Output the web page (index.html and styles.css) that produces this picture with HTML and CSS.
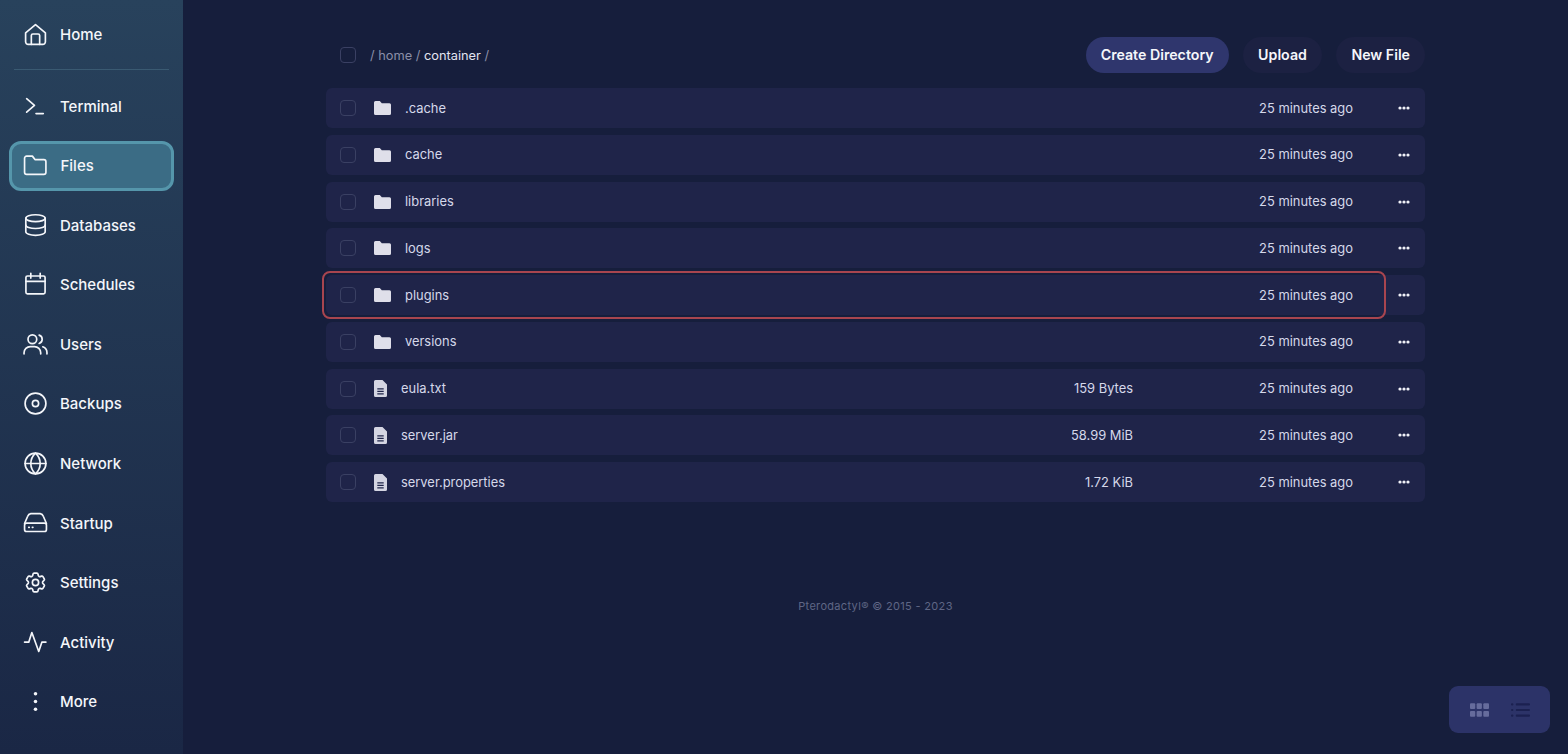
FILE: index.html
```html
<!DOCTYPE html>
<html lang="en">
<head>
    <meta charset="UTF-8">
    <title>Files</title>
    <meta name="viewport" content="width=device-width, initial-scale=1">
    <link rel="stylesheet" href="styles.css">
</head>
<body>
    <nav class="sidebar">
        <a class="nav-item nav-home">
            <svg class="nav-icon" viewBox="0 0 24 24"><path d="M2.500 10.500 12 2.500l9.500 8V19a2.500 2.500 0 0 1-2.500 2.500H5A2.500 2.500 0 0 1 2.500 19z"/><path d="M8 21.500V13a1.500 1.500 0 0 1 1.500-1.500h5A1.500 1.500 0 0 1 16 13v8.500"/></svg>
            <span>Home</span>
        </a>
        <div class="nav-divider"></div>
        <a class="nav-item">
            <svg class="nav-icon" viewBox="0 0 24 24"><path d="m3.500 4.500 7.500 6.500-7.500 6.500"/><path d="M12.500 18.800h7"/></svg>
            <span>Terminal</span>
        </a>
        <a class="nav-item is-active">
            <svg class="nav-icon" viewBox="0 0 24 24"><path d="M1.500 5a2 2 0 0 1 2-2h5.500l2.500 3.300H20a2 2 0 0 1 2 2V18.500a2 2 0 0 1-2 2H3.500a2 2 0 0 1-2-2z"/></svg>
            <span>Files</span>
        </a>
        <a class="nav-item">
            <svg class="nav-icon" viewBox="0 0 24 24"><ellipse cx="12" cy="5" rx="9.300" ry="3.300"/><path d="M2.700 5v13c0 1.900 4.200 3.400 9.300 3.400s9.300-1.500 9.300-3.400V5"/><path d="M2.700 11.500c0 1.900 4.200 3.400 9.300 3.400s9.300-1.500 9.300-3.400"/></svg>
            <span>Databases</span>
        </a>
        <a class="nav-item">
            <svg class="nav-icon" viewBox="0 0 24 24"><rect x="2.800" y="3.800" width="18.400" height="17.200" rx="1.500"/><path d="M7.500 1.200v4.600M16.500 1.200v4.600M2.800 9h18.400"/></svg>
            <span>Schedules</span>
        </a>
        <a class="nav-item">
            <svg class="nav-icon" viewBox="0 0 24 24"><circle cx="9" cy="7" r="4.200"/><path d="M1 21v-1a6 6 0 0 1 6-6h4a6 6 0 0 1 6 6v1"/><path d="M15.500 3a4.200 4.200 0 0 1 0 8"/><path d="M19 14.200a6 6 0 0 1 4 5.600V21"/></svg>
            <span>Users</span>
        </a>
        <a class="nav-item">
            <svg class="nav-icon" viewBox="0 0 24 24"><circle cx="12" cy="12" r="10"/><circle cx="12" cy="12" r="3"/></svg>
            <span>Backups</span>
        </a>
        <a class="nav-item">
            <svg class="nav-icon" viewBox="0 0 24 24"><circle cx="12" cy="12" r="10"/><path d="M2 12h20"/><path d="M12 2c3 2.800 4.500 6.200 4.500 10s-1.500 7.200-4.500 10c-3-2.800-4.500-6.200-4.500-10S9 4.800 12 2z"/></svg>
            <span>Network</span>
        </a>
        <a class="nav-item">
            <svg class="nav-icon" viewBox="0 0 24 24"><path d="M1.500 12 4.500 5a4 4 0 0 1 3-2.500h9a4 4 0 0 1 3 2.500l3 7"/><rect x="1.500" y="11.700" width="21" height="8" rx="2"/><path d="M5.500 15.700h.5M9 15.700h.5"/></svg>
            <span>Startup</span>
        </a>
        <a class="nav-item">
            <svg class="nav-icon" viewBox="0 0 24 24"><path d="M9.594 3.940c.09-.542.56-.94 1.110-.94h2.593c.55 0 1.020.398 1.110.94l.213 1.281c.063.374.313.686.645.870.074.040.147.083.22.127.325.196.72.257 1.075.124l1.217-.456a1.125 1.125 0 0 1 1.370.49l1.296 2.247a1.125 1.125 0 0 1-.26 1.431l-1.003.827c-.293.241-.438.613-.43.992a7.723 7.723 0 0 1 0 .255c-.008.378.137.75.43.991l1.004.827c.424.35.534.955.26 1.430l-1.298 2.247a1.125 1.125 0 0 1-1.369.491l-1.217-.456c-.355-.133-.75-.072-1.076.124a6.470 6.470 0 0 1-.22.128c-.331.183-.581.495-.644.869l-.213 1.281c-.09.543-.56.94-1.110.94h-2.594c-.55 0-1.019-.398-1.110-.94l-.213-1.281c-.062-.374-.312-.686-.644-.870a6.520 6.520 0 0 1-.22-.127c-.325-.196-.72-.257-1.076-.124l-1.217.456a1.125 1.125 0 0 1-1.369-.49l-1.297-2.247a1.125 1.125 0 0 1 .26-1.431l1.004-.827c.292-.24.437-.613.43-.991a6.932 6.932 0 0 1 0-.255c.007-.38-.138-.751-.43-.992l-1.004-.827a1.125 1.125 0 0 1-.26-1.430l1.297-2.247a1.125 1.125 0 0 1 1.370-.491l1.216.456c.356.133.751.072 1.076-.124.072-.044.146-.086.22-.128.332-.183.582-.495.644-.869l.214-1.280z"/><circle cx="12" cy="12" r="3"/></svg>
            <span>Settings</span>
        </a>
        <a class="nav-item">
            <svg class="nav-icon" viewBox="0 0 24 24"><path d="M1.500 11.700h4l3-9.300 6.600 18.200 3-8.900h3.900"/></svg>
            <span>Activity</span>
        </a>
        <a class="nav-item">
            <svg class="nav-icon" viewBox="0 0 24 24"><circle class="dot" cx="12" cy="4.500" r="1.700"/><circle class="dot" cx="12" cy="12" r="1.700"/><circle class="dot" cx="12" cy="19.500" r="1.700"/></svg>
            <span>More</span>
        </a>
    </nav>

    <main class="main">
        <div class="content">
            <div class="toolbar">
                <div class="crumbs">
                    <span class="check"></span>
                    <span class="crumb-path">/ home / <b>container</b> /</span>
                </div>
                <div class="actions">
                    <button class="btn btn-primary">Create Directory</button>
                    <button class="btn">Upload</button>
                    <button class="btn">New File</button>
                </div>
            </div>

            <div class="file-row">
                <span class="check"></span>
                <svg class="folder-icon" viewBox="0 0 17 14"><path d="M0 1.500A1.500 1.500 0 0 1 1.500 0h4.300l2 2.200h7.700A1.500 1.500 0 0 1 17 3.700v8.800a1.500 1.500 0 0 1-1.500 1.500h-14A1.500 1.500 0 0 1 0 12.500z"/></svg>
                <span class="file-name">.cache</span>
                <span class="file-size"></span>
                <span class="file-date">25 minutes ago</span>
                <svg class="more-icon" viewBox="0 0 12 4"><circle cx="2" cy="2" r="1.600"/><circle cx="6" cy="2" r="1.600"/><circle cx="10" cy="2" r="1.600"/></svg>
            </div>
            <div class="file-row">
                <span class="check"></span>
                <svg class="folder-icon" viewBox="0 0 17 14"><path d="M0 1.500A1.500 1.500 0 0 1 1.500 0h4.300l2 2.200h7.700A1.500 1.500 0 0 1 17 3.700v8.800a1.500 1.500 0 0 1-1.500 1.500h-14A1.500 1.500 0 0 1 0 12.500z"/></svg>
                <span class="file-name">cache</span>
                <span class="file-size"></span>
                <span class="file-date">25 minutes ago</span>
                <svg class="more-icon" viewBox="0 0 12 4"><circle cx="2" cy="2" r="1.600"/><circle cx="6" cy="2" r="1.600"/><circle cx="10" cy="2" r="1.600"/></svg>
            </div>
            <div class="file-row">
                <span class="check"></span>
                <svg class="folder-icon" viewBox="0 0 17 14"><path d="M0 1.500A1.500 1.500 0 0 1 1.500 0h4.300l2 2.200h7.700A1.500 1.500 0 0 1 17 3.700v8.800a1.500 1.500 0 0 1-1.500 1.500h-14A1.500 1.500 0 0 1 0 12.500z"/></svg>
                <span class="file-name">libraries</span>
                <span class="file-size"></span>
                <span class="file-date">25 minutes ago</span>
                <svg class="more-icon" viewBox="0 0 12 4"><circle cx="2" cy="2" r="1.600"/><circle cx="6" cy="2" r="1.600"/><circle cx="10" cy="2" r="1.600"/></svg>
            </div>
            <div class="file-row">
                <span class="check"></span>
                <svg class="folder-icon" viewBox="0 0 17 14"><path d="M0 1.500A1.500 1.500 0 0 1 1.500 0h4.300l2 2.200h7.700A1.500 1.500 0 0 1 17 3.700v8.800a1.500 1.500 0 0 1-1.500 1.500h-14A1.500 1.500 0 0 1 0 12.500z"/></svg>
                <span class="file-name">logs</span>
                <span class="file-size"></span>
                <span class="file-date">25 minutes ago</span>
                <svg class="more-icon" viewBox="0 0 12 4"><circle cx="2" cy="2" r="1.600"/><circle cx="6" cy="2" r="1.600"/><circle cx="10" cy="2" r="1.600"/></svg>
            </div>
            <div class="file-row has-marker">
                <span class="check"></span>
                <svg class="folder-icon" viewBox="0 0 17 14"><path d="M0 1.500A1.500 1.500 0 0 1 1.500 0h4.300l2 2.200h7.700A1.500 1.500 0 0 1 17 3.700v8.800a1.500 1.500 0 0 1-1.500 1.500h-14A1.500 1.500 0 0 1 0 12.500z"/></svg>
                <span class="file-name">plugins</span>
                <span class="file-size"></span>
                <span class="file-date">25 minutes ago</span>
                <svg class="more-icon" viewBox="0 0 12 4"><circle cx="2" cy="2" r="1.600"/><circle cx="6" cy="2" r="1.600"/><circle cx="10" cy="2" r="1.600"/></svg>
                <div class="row-marker"></div>
            </div>
            <div class="file-row">
                <span class="check"></span>
                <svg class="folder-icon" viewBox="0 0 17 14"><path d="M0 1.500A1.500 1.500 0 0 1 1.500 0h4.300l2 2.200h7.700A1.500 1.500 0 0 1 17 3.700v8.800a1.500 1.500 0 0 1-1.500 1.500h-14A1.500 1.500 0 0 1 0 12.500z"/></svg>
                <span class="file-name">versions</span>
                <span class="file-size"></span>
                <span class="file-date">25 minutes ago</span>
                <svg class="more-icon" viewBox="0 0 12 4"><circle cx="2" cy="2" r="1.600"/><circle cx="6" cy="2" r="1.600"/><circle cx="10" cy="2" r="1.600"/></svg>
            </div>
            <div class="file-row">
                <span class="check"></span>
                <svg class="doc-icon" viewBox="0 0 13 17"><path fill-rule="evenodd" d="M1.500 0H8.500L13 4.500v11a1.500 1.500 0 0 1-1.500 1.500h-10A1.500 1.500 0 0 1 0 15.500v-14A1.500 1.500 0 0 1 1.500 0zM3.300 8.200v1.300h6.400V8.200zm0 2.500V12h6.400v-1.300zm0 2.500v1.300h6.400v-1.300z"/></svg>
                <span class="file-name">eula.txt</span>
                <span class="file-size">159 Bytes</span>
                <span class="file-date">25 minutes ago</span>
                <svg class="more-icon" viewBox="0 0 12 4"><circle cx="2" cy="2" r="1.600"/><circle cx="6" cy="2" r="1.600"/><circle cx="10" cy="2" r="1.600"/></svg>
            </div>
            <div class="file-row">
                <span class="check"></span>
                <svg class="doc-icon" viewBox="0 0 13 17"><path fill-rule="evenodd" d="M1.500 0H8.500L13 4.500v11a1.500 1.500 0 0 1-1.500 1.500h-10A1.500 1.500 0 0 1 0 15.500v-14A1.500 1.500 0 0 1 1.500 0zM3.300 8.200v1.300h6.400V8.200zm0 2.500V12h6.400v-1.300zm0 2.500v1.300h6.400v-1.300z"/></svg>
                <span class="file-name">server.jar</span>
                <span class="file-size">58.99 MiB</span>
                <span class="file-date">25 minutes ago</span>
                <svg class="more-icon" viewBox="0 0 12 4"><circle cx="2" cy="2" r="1.600"/><circle cx="6" cy="2" r="1.600"/><circle cx="10" cy="2" r="1.600"/></svg>
            </div>
            <div class="file-row">
                <span class="check"></span>
                <svg class="doc-icon" viewBox="0 0 13 17"><path fill-rule="evenodd" d="M1.500 0H8.500L13 4.500v11a1.500 1.500 0 0 1-1.500 1.500h-10A1.500 1.500 0 0 1 0 15.500v-14A1.500 1.500 0 0 1 1.500 0zM3.300 8.200v1.300h6.400V8.200zm0 2.500V12h6.400v-1.300zm0 2.500v1.300h6.400v-1.300z"/></svg>
                <span class="file-name">server.properties</span>
                <span class="file-size">1.72 KiB</span>
                <span class="file-date">25 minutes ago</span>
                <svg class="more-icon" viewBox="0 0 12 4"><circle cx="2" cy="2" r="1.600"/><circle cx="6" cy="2" r="1.600"/><circle cx="10" cy="2" r="1.600"/></svg>
            </div>

            <footer class="footer">Pterodactyl&reg; &copy; 2015 - 2023</footer>
        </div>
    </main>

    <div class="view-toggle">
        <svg class="toggle-icon toggle-grid" viewBox="0 0 20 14"><rect x="0" y="0" width="5.500" height="6" rx="1"/><rect x="7" y="0" width="5.500" height="6" rx="1"/><rect x="14" y="0" width="6" height="6" rx="1"/><rect x="0" y="8" width="5.500" height="6" rx="1"/><rect x="7" y="8" width="5.500" height="6" rx="1"/><rect x="14" y="8" width="6" height="6" rx="1"/></svg>
        <svg class="toggle-icon toggle-list" viewBox="0 0 20 14"><rect x="0" y="0" width="2.500" height="2.200" rx="1"/><rect x="5" y="0" width="15" height="2.200" rx="1"/><rect x="0" y="5.900" width="2.500" height="2.200" rx="1"/><rect x="5" y="5.900" width="15" height="2.200" rx="1"/><rect x="0" y="11.800" width="2.500" height="2.200" rx="1"/><rect x="5" y="11.800" width="15" height="2.200" rx="1"/></svg>
    </div>
</body>
</html>
```

FILE: styles.css
```css
:root {
    --page-bg: #161e3c;
    --row-bg: #1f2449;
    --text-main: #d5d8ea;
}
* { box-sizing: border-box; }
html, body {
    height: 100%;
}
body {
    margin: 0;
    display: flex;
    background: var(--page-bg);
    color: var(--text-main);
    font-family: Inter, 'Noto Sans', sans-serif;
    overflow: hidden;
}

/* sidebar */
.sidebar {
    width: 183px;
    flex: none;
    height: 754px;
    padding: 5px 9px 0 10px;
    background: linear-gradient(180deg, #28425c 0%, #1a2745 100%);
    display: flex;
    flex-direction: column;
}
.nav-item {
    height: 48px;
    margin-bottom: 11.600px;
    padding-left: 10.500px;
    display: flex;
    align-items: center;
    gap: 12.500px;
    border: 2.500px solid transparent;
    border-radius: 12px;
    color: #f4f6fa;
    font-size: 15px;
    font-weight: 500;
}
.nav-home {
    margin: 5.500px 0 0;
}
.nav-divider {
    height: 1px;
    margin: 10.500px 5px 12px 4px;
    background: #3a5a72;
}
.is-active {
    height: 50px;
    margin: -1px 0 10.600px -1px;
    padding-left: 11px;
    background: #3b6c85;
    border: 3px solid #5596ab;
}
.nav-icon {
    width: 25px;
    height: 25px;
    flex: none;
    fill: none;
    stroke: #f4f6fa;
    stroke-width: 1.600;
    stroke-linecap: round;
    stroke-linejoin: round;
}
.nav-icon .dot {
    fill: #f4f6fa;
    stroke: none;
}

/* main */
.main {
    flex: 1;
    display: flex;
    justify-content: center;
}
.content {
    width: 1099px;
    padding-top: 37px;
}
.toolbar {
    height: 36px;
    margin-bottom: 15px;
    display: flex;
    align-items: center;
    justify-content: space-between;
}
.crumbs {
    display: flex;
    align-items: center;
    padding-left: 14px;
}
.crumb-path {
    margin-left: 14px;
    font-size: 12.800px;
    color: #8b8fa8;
}
.crumb-path b {
    font-weight: 400;
    color: #e2e4f0;
}
.actions {
    display: flex;
    gap: 14.500px;
}
.btn {
    height: 36px;
    padding: 0 15px 2px;
    border: none;
    border-radius: 18px;
    background: #1c2142;
    color: #f5f6fb;
    font-family: inherit;
    font-size: 14.200px;
    font-weight: 600;
}
.btn-primary {
    background: #2f366d;
}
.check {
    width: 16px;
    height: 16px;
    flex: none;
    border: 1.500px solid #3a4063;
    border-radius: 4px;
}

/* file list */
.file-row {
    height: 40px;
    margin-bottom: 6.750px;
    padding: 0 15px 0 14px;
    display: flex;
    align-items: center;
    background: var(--row-bg);
    border-radius: 6px;
    font-size: 12.900px;
}
.has-marker {
    position: relative;
}
.row-marker {
    position: absolute;
    left: -4px;
    top: -4px;
    width: 1064px;
    height: 48px;
    border: 2px solid #a8454f;
    border-radius: 8px;
}
.folder-icon {
    width: 17px;
    height: 14px;
    margin-left: 18px;
    flex: none;
    fill: #dfdfea;
}
.doc-icon {
    width: 13px;
    height: 17px;
    margin-left: 18px;
    flex: none;
    fill: #d4d5e2;
}
.file-name {
    margin-left: 14px;
    flex: 1;
}
.file-size {
    width: 120px;
    text-align: right;
}
.file-date {
    width: 220px;
    text-align: right;
}
.more-icon {
    width: 12px;
    height: 4px;
    margin-left: 45px;
    flex: none;
    fill: #f0f1f8;
}
.footer {
    margin-top: 97px;
    text-align: center;
    font-size: 11px;
    letter-spacing: 0.320px;
    color: #5f6685;
}

/* view switch */
.view-toggle {
    position: absolute;
    left: 1449px;
    top: 686px;
    width: 101px;
    height: 47px;
    display: flex;
    align-items: center;
    justify-content: center;
    gap: 22px;
    background: #2c3368;
    border-radius: 9px;
}
.toggle-icon {
    width: 19px;
    height: 14px;
}
.toggle-grid {
    fill: #666c9c;
}
.toggle-list {
    fill: #1b2150;
}
```
